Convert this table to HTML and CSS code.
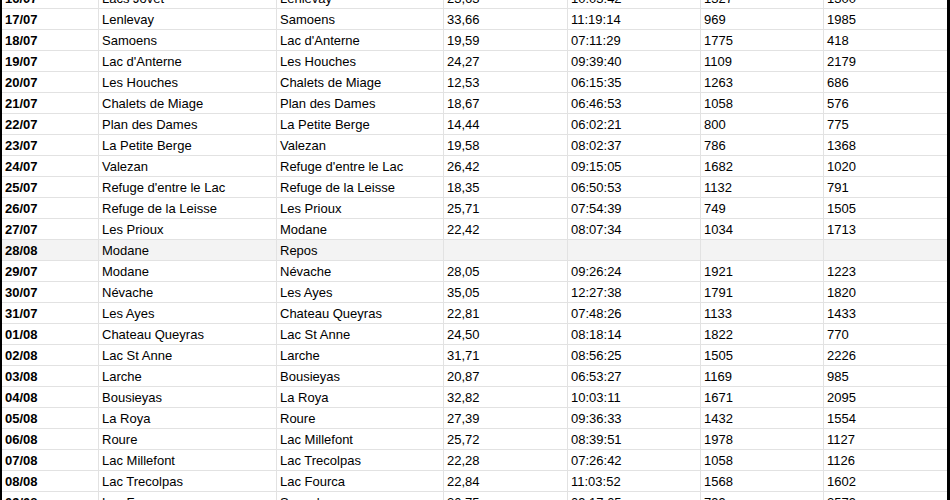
FILE: index.html
```html
<!DOCTYPE html>
<html lang="fr">
<head>
<meta charset="utf-8">
<title>Etapes</title>
<link rel="stylesheet" href="styles.css">
</head>
<body>
<div class="sheet">
  <div class="row"><div class="c d">16/07</div><div class="c">Lacs Jovet</div><div class="c">Lenlevay</div><div class="c">23,63</div><div class="c">10:03:42</div><div class="c">1327</div><div class="c">1300</div></div>
  <div class="row"><div class="c d">17/07</div><div class="c">Lenlevay</div><div class="c">Samoens</div><div class="c">33,66</div><div class="c">11:19:14</div><div class="c">969</div><div class="c">1985</div></div>
  <div class="row"><div class="c d">18/07</div><div class="c">Samoens</div><div class="c">Lac d'Anterne</div><div class="c">19,59</div><div class="c">07:11:29</div><div class="c">1775</div><div class="c">418</div></div>
  <div class="row"><div class="c d">19/07</div><div class="c">Lac d'Anterne</div><div class="c">Les Houches</div><div class="c">24,27</div><div class="c">09:39:40</div><div class="c">1109</div><div class="c">2179</div></div>
  <div class="row"><div class="c d">20/07</div><div class="c">Les Houches</div><div class="c">Chalets de Miage</div><div class="c">12,53</div><div class="c">06:15:35</div><div class="c">1263</div><div class="c">686</div></div>
  <div class="row"><div class="c d">21/07</div><div class="c">Chalets de Miage</div><div class="c">Plan des Dames</div><div class="c">18,67</div><div class="c">06:46:53</div><div class="c">1058</div><div class="c">576</div></div>
  <div class="row"><div class="c d">22/07</div><div class="c">Plan des Dames</div><div class="c">La Petite Berge</div><div class="c">14,44</div><div class="c">06:02:21</div><div class="c">800</div><div class="c">775</div></div>
  <div class="row"><div class="c d">23/07</div><div class="c">La Petite Berge</div><div class="c">Valezan</div><div class="c">19,58</div><div class="c">08:02:37</div><div class="c">786</div><div class="c">1368</div></div>
  <div class="row"><div class="c d">24/07</div><div class="c">Valezan</div><div class="c">Refuge d'entre le Lac</div><div class="c">26,42</div><div class="c">09:15:05</div><div class="c">1682</div><div class="c">1020</div></div>
  <div class="row"><div class="c d">25/07</div><div class="c">Refuge d'entre le Lac</div><div class="c">Refuge de la Leisse</div><div class="c">18,35</div><div class="c">06:50:53</div><div class="c">1132</div><div class="c">791</div></div>
  <div class="row"><div class="c d">26/07</div><div class="c">Refuge de la Leisse</div><div class="c">Les Prioux</div><div class="c">25,71</div><div class="c">07:54:39</div><div class="c">749</div><div class="c">1505</div></div>
  <div class="row"><div class="c d">27/07</div><div class="c">Les Prioux</div><div class="c">Modane</div><div class="c">22,42</div><div class="c">08:07:34</div><div class="c">1034</div><div class="c">1713</div></div>
  <div class="row rest"><div class="c d">28/08</div><div class="c">Modane</div><div class="c">Repos</div><div class="c"></div><div class="c"></div><div class="c"></div><div class="c"></div></div>
  <div class="row"><div class="c d">29/07</div><div class="c">Modane</div><div class="c">Névache</div><div class="c">28,05</div><div class="c">09:26:24</div><div class="c">1921</div><div class="c">1223</div></div>
  <div class="row"><div class="c d">30/07</div><div class="c">Névache</div><div class="c">Les Ayes</div><div class="c">35,05</div><div class="c">12:27:38</div><div class="c">1791</div><div class="c">1820</div></div>
  <div class="row"><div class="c d">31/07</div><div class="c">Les Ayes</div><div class="c">Chateau Queyras</div><div class="c">22,81</div><div class="c">07:48:26</div><div class="c">1133</div><div class="c">1433</div></div>
  <div class="row"><div class="c d">01/08</div><div class="c">Chateau Queyras</div><div class="c">Lac St Anne</div><div class="c">24,50</div><div class="c">08:18:14</div><div class="c">1822</div><div class="c">770</div></div>
  <div class="row"><div class="c d">02/08</div><div class="c">Lac St Anne</div><div class="c">Larche</div><div class="c">31,71</div><div class="c">08:56:25</div><div class="c">1505</div><div class="c">2226</div></div>
  <div class="row"><div class="c d">03/08</div><div class="c">Larche</div><div class="c">Bousieyas</div><div class="c">20,87</div><div class="c">06:53:27</div><div class="c">1169</div><div class="c">985</div></div>
  <div class="row"><div class="c d">04/08</div><div class="c">Bousieyas</div><div class="c">La Roya</div><div class="c">32,82</div><div class="c">10:03:11</div><div class="c">1671</div><div class="c">2095</div></div>
  <div class="row"><div class="c d">05/08</div><div class="c">La Roya</div><div class="c">Roure</div><div class="c">27,39</div><div class="c">09:36:33</div><div class="c">1432</div><div class="c">1554</div></div>
  <div class="row"><div class="c d">06/08</div><div class="c">Roure</div><div class="c">Lac Millefont</div><div class="c">25,72</div><div class="c">08:39:51</div><div class="c">1978</div><div class="c">1127</div></div>
  <div class="row"><div class="c d">07/08</div><div class="c">Lac Millefont</div><div class="c">Lac Trecolpas</div><div class="c">22,28</div><div class="c">07:26:42</div><div class="c">1058</div><div class="c">1126</div></div>
  <div class="row"><div class="c d">08/08</div><div class="c">Lac Trecolpas</div><div class="c">Lac Fourca</div><div class="c">22,84</div><div class="c">11:03:52</div><div class="c">1568</div><div class="c">1602</div></div>
  <div class="row"><div class="c d">09/08</div><div class="c">Lac Fourca</div><div class="c">Sospel</div><div class="c">30,75</div><div class="c">09:17:05</div><div class="c">799</div><div class="c">2579</div></div>
</div>
</body>
</html>
```

FILE: styles.css
```css
html, body {
  margin: 0;
  padding: 0;
  background: #fff;
}

body {
  overflow: hidden;
  font-family: "Liberation Sans", Arial, sans-serif;
  font-size: 13px;
  color: #000;
}

.sheet {
  width: 950px;
  box-sizing: border-box;
  border-left: 2px solid #000;
  border-right: 3px solid #000;
  margin-top: -12px;
}

.row {
  display: grid;
  grid-template-columns: 97px 178px 167px 124px 133px 123px 123px;
}

.row.rest {
  background: #f3f3f3;
}

.c {
  box-sizing: border-box;
  height: 21px;
  line-height: 20px;
  padding: 1px 3px 0;
  border-right: 1px solid #e2e2e2;
  border-bottom: 1px solid #e2e2e2;
  white-space: nowrap;
  overflow: hidden;
}

.c:last-child {
  border-right: 0;
}

.d {
  font-weight: bold;
}
```
